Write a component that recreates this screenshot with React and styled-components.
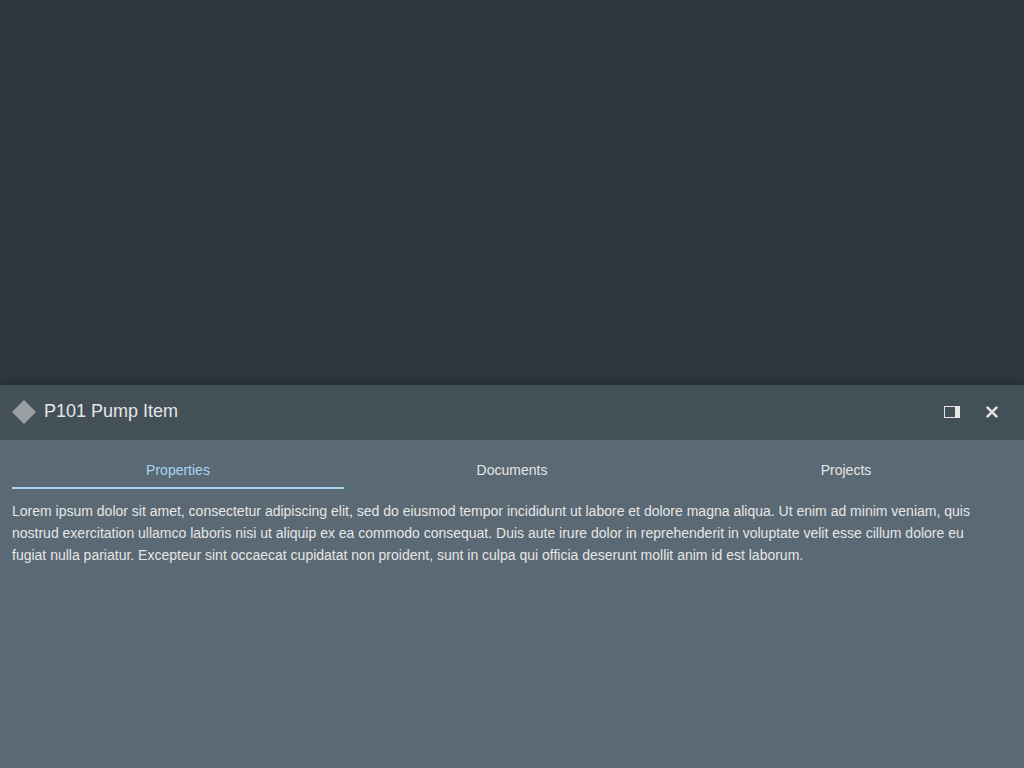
import React, { useState } from "react";
import styled, { createGlobalStyle } from "styled-components";

const GlobalStyle = createGlobalStyle`
  *, *::before, *::after { box-sizing: border-box; }
  body {
    margin: 0;
    background: #30363e;
    color: #e6e6e6;
    font-family: "Liberation Sans", Arial, sans-serif;
    font-size: 14px;
    line-height: 22px;
  }
`;

const Screen = styled.main`
  display: flex;
  flex-direction: column;
  justify-content: flex-end;
  min-height: 100vh;
  overflow: hidden;
`;

const Panel = styled.section`
  display: flex;
  flex-direction: column;
  min-height: 50vh;
  border-top: 1px solid #2a3136;
  background: #5b6974;
  box-shadow: 0 0 10px 0 rgba(20, 28, 30, 0.5);
`;

const Header = styled.header`
  display: flex;
  align-items: center;
  gap: 8px;
  height: 55px;
  padding: 0 12px 1px;
  background: #445057;
`;

const Title = styled.h1`
  flex: 1;
  margin: 0;
  padding-bottom: 2px;
  font-size: 18px;
  font-weight: 400;
  line-height: 24px;
`;

const IconButton = styled.button`
  display: flex;
  align-items: center;
  justify-content: center;
  width: 40px;
  height: 40px;
  padding: 0;
  border: 0;
  background: transparent;
  color: inherit;
  cursor: pointer;
`;

const Actions = styled.div`
  display: flex;
`;

const TabList = styled.div`
  display: grid;
  grid-template-columns: repeat(3, 1fr);
  gap: 2px;
  padding: 12px 12px 0;
`;

const Tab = styled.button`
  height: 37px;
  padding: 0 12px;
  border: 0;
  border-bottom: 2px solid ${(p) => (p.$active ? "#a5d7f5" : "transparent")};
  background: transparent;
  color: ${(p) => (p.$active ? "#a5d7f5" : "inherit")};
  font: inherit;
  cursor: pointer;
`;

const Content = styled.div`
  padding: 11px 24px 12px 12px;
`;

const Text = styled.p`
  margin: 0;
`;

const TABS = ["Properties", "Documents", "Projects"];

export default function App() {
  const [active, setActive] = useState(TABS[0]);
  return (
    <Screen>
      <GlobalStyle />
      <Panel>
        <Header>
          <svg width="24" height="24" viewBox="0 0 24 24" aria-hidden="true">
            <path d="M12 0 24 12 12 24 0 12Z" fill="#999fa2" />
          </svg>
          <Title>P101 Pump Item</Title>
          <Actions>
            <IconButton type="button" aria-label="Dock to the right">
              <svg width="16" height="16" viewBox="0 0 16 16" fill="currentColor">
                <path fillRule="evenodd" d="M0 2H16V14H0ZM1 3V13H11V3Z" />
              </svg>
            </IconButton>
            <IconButton type="button" aria-label="Close">
              <svg width="16" height="16" viewBox="0 0 16 16" stroke="currentColor" strokeWidth="2.4">
                <path d="M2.8 2.8 13.2 13.2M13.2 2.8 2.8 13.2" />
              </svg>
            </IconButton>
          </Actions>
        </Header>
        <TabList role="tablist">
          {TABS.map((name) => (
            <Tab
              key={name}
              type="button"
              role="tab"
              aria-selected={name === active}
              $active={name === active}
              onClick={() => setActive(name)}
            >
              {name}
            </Tab>
          ))}
        </TabList>
        <Content role="tabpanel" aria-label={active}>
          <Text>
            Lorem ipsum dolor sit amet, consectetur adipiscing elit, sed do eiusmod tempor incididunt ut
            labore et dolore magna aliqua. Ut enim ad minim veniam, quis nostrud exercitation ullamco
            laboris nisi ut aliquip ex ea commodo consequat. Duis aute irure dolor in reprehenderit in
            voluptate velit esse cillum dolore eu fugiat nulla pariatur. Excepteur sint occaecat cupidatat
            non proident, sunt in culpa qui officia deserunt mollit anim id est laborum.
          </Text>
        </Content>
      </Panel>
    </Screen>
  );
}
